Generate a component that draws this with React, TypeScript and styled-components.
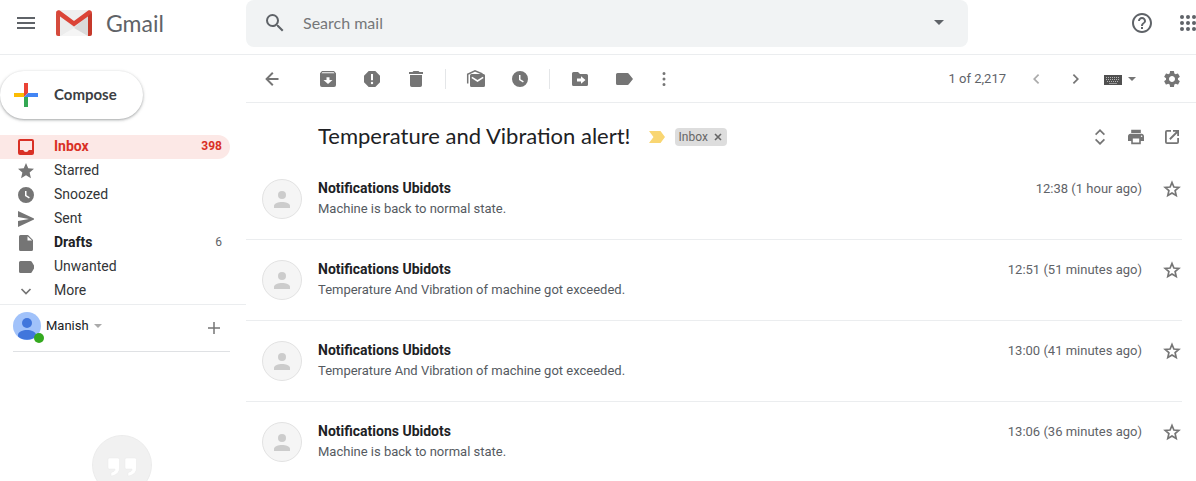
import React from 'react';
import styled, { createGlobalStyle } from 'styled-components';
import {
  MdSearch,
  MdHelpOutline,
  MdSettings,
  MdStar,
  MdPrint,
} from 'react-icons/md';

const display = '"Lato", "Liberation Sans", sans-serif';

const GlobalStyle = createGlobalStyle`
  *, *::before, *::after { box-sizing: border-box; }
  body {
    margin: 0;
    background: #fff;
    color: #202124;
    font-family: Roboto, "Liberation Sans", sans-serif;
    font-size: 14px;
  }
  button, input {
    font: inherit;
    color: inherit;
    border: 0;
    padding: 0;
    background: none;
  }
  button { cursor: pointer; }
  a { color: inherit; text-decoration: none; }
  h1, h2, p, ul { margin: 0; padding: 0; font-weight: 400; }
  ul { list-style: none; }
  svg { display: block; flex: none; }
`;

const Shell = styled.div`
  display: flex;
  flex-direction: column;
  height: 100vh;
  overflow: hidden;
`;

const Header = styled.header`
  display: flex;
  align-items: center;
  flex: none;
  height: 55px;
  padding-bottom: 8px;
  border-bottom: 1px solid #ebedef;
  color: #5f6368;
`;

const Brand = styled.div`
  display: flex;
  align-items: center;
  flex: none;
  width: 246px;
  padding-left: 16px;
`;

const BrandLink = styled.a`
  display: flex;
  align-items: center;
  gap: 14px;
  margin-left: 20px;
  font: 400 23px/28px ${display};
`;

const SearchBar = styled.form`
  display: flex;
  align-items: center;
  align-self: flex-start;
  flex: 0 1 722px;
  height: 47px;
  padding: 0 24px 2px 17px;
  border-radius: 8px;
  background: #f1f3f4;
`;

const SearchInput = styled.input`
  flex: 1;
  min-width: 0;
  margin-left: 16px;
  font: 400 16px/24px ${display};
  outline: none;
  &::placeholder { color: #757779; opacity: 1; }
`;

const HeaderActions = styled.div`
  display: flex;
  align-items: center;
  gap: 26px;
  margin-left: auto;
`;

const PlainButton = styled.button`
  display: flex;
  align-items: center;
  justify-content: center;
`;

const Body = styled.div`
  display: flex;
  flex: 1;
  min-height: 0;
`;

const Sidebar = styled.aside`
  flex: none;
  width: 246px;
`;

const ComposeButton = styled.button`
  display: flex;
  align-items: center;
  gap: 16px;
  width: 143px;
  height: 48px;
  margin: 16px 0;
  padding-left: 14px;
  border-radius: 24px;
  background: #fff;
  box-shadow: 0 1px 2px rgba(60, 64, 67, 0.3), 0 1px 3px 1px rgba(60, 64, 67, 0.15);
  color: #3c4043;
  font: 700 15px/20px ${display};
`;

const ComposeLabel = styled.span`
  padding-bottom: 2px;
`;

const NavLink = styled.a<{ $active?: boolean; $strong?: boolean }>`
  display: flex;
  align-items: center;
  width: 230px;
  height: 24px;
  padding: 0 8px 0 18px;
  border-radius: 0 12px 12px 0;
  background: ${(p) => (p.$active ? '#fce8e6' : 'transparent')};
  color: ${(p) => (p.$active ? '#d93025' : p.$strong ? '#202124' : '#333537')};
  font-weight: ${(p) => (p.$active || p.$strong ? 700 : 400)};
  line-height: 20px;
  svg { color: ${(p) => (p.$active ? '#d93025' : '#757575')}; }
`;

const NavLabel = styled.span`
  flex: 1;
  margin-left: 20px;
  padding-bottom: 2px;
`;

const NavCount = styled.span<{ $active?: boolean }>`
  padding-bottom: 2px;
  font-size: 12px;
  font-weight: ${(p) => (p.$active ? 700 : 400)};
  color: ${(p) => (p.$active ? '#d93025' : '#5f6368')};
`;

const Account = styled.div`
  margin-top: 1px;
  padding: 7px 16px 0 13px;
  border-top: 1px solid #ebedef;
`;

const AccountRow = styled.div`
  display: flex;
  height: 40px;
  border-bottom: 1px solid #dfe1e4;
`;

const AccountButton = styled.button`
  display: flex;
  align-items: center;
  gap: 5px;
  height: 28px;
  font-size: 13px;
`;

const AccountName = styled.span`
  padding-bottom: 2px;
`;

const AccountAvatar = styled.span`
  position: relative;
  width: 28px;
  height: 28px;
`;

const Presence = styled.span`
  position: absolute;
  right: -3px;
  bottom: -3px;
  width: 10px;
  height: 10px;
  border-radius: 50%;
  background: #34a91f;
`;

const AddButton = styled(PlainButton)`
  width: 32px;
  height: 32px;
  margin-left: auto;
`;

const Hangouts = styled.div`
  display: flex;
  justify-content: center;
  margin-top: 83px;
  padding-right: 2px;
`;

const Main = styled.main`
  flex: 1;
  min-width: 0;
`;

const Toolbar = styled.div`
  display: flex;
  align-items: center;
  height: 48px;
  padding: 0 2px 0 4px;
  border-bottom: 1px solid #ebedef;
  color: #757575;
`;

const ToolButton = styled(PlainButton)<{ $width?: number }>`
  flex: none;
  width: ${(p) => p.$width ?? 44}px;
  height: 36px;
  &:disabled { opacity: 0.6; }
`;

const Group = styled.div`
  display: flex;
  & + & {
    margin-left: 7px;
    padding-left: 9px;
    background: linear-gradient(#e4e6e8, #e4e6e8) left center / 1px 20px no-repeat;
  }
`;

const BackSlot = styled.div`
  margin-right: 12px;
`;

const Pager = styled.div`
  display: flex;
  align-items: center;
  margin-left: auto;
`;

const PageCount = styled.span`
  margin-right: 10px;
  color: #5f6368;
  font-size: 13px;
`;

const InputTools = styled(PlainButton)`
  gap: 6px;
  margin: 0 14px 0 8px;
`;

const SubjectRow = styled.div`
  display: flex;
  align-items: center;
  padding: 12px 6px 0 72px;
  height: 56px;
`;

const Subject = styled.h1`
  padding-bottom: 2px;
  font: 400 22px/28px ${display};
  color: #202124;
  white-space: nowrap;
`;

const Importance = styled(PlainButton)`
  margin: 0 10px 0 18px;
`;

const LabelChip = styled.span`
  display: flex;
  align-items: center;
  gap: 6px;
  height: 18px;
  padding: 0 5px 0 4px;
  border-radius: 4px;
  background: #ddd;
  color: #666;
  font-size: 12px;
`;

const SubjectActions = styled.div`
  display: flex;
  margin-left: auto;
  color: #757575;
`;

const Message = styled.li`
  display: flex;
  margin-right: 14px;
  padding: 20px 0 20px 16px;
  border-bottom: 1px solid #ebedef;
`;

const MessageText = styled.div`
  flex: 1;
  min-width: 0;
  margin-left: 16px;
  line-height: 20px;
`;

const Sender = styled.h2`
  margin-bottom: 2px;
  font-size: 14px;
  font-weight: 700;
  line-height: 18px;
`;

const Snippet = styled.p`
  color: #555a5f;
  font-size: 13px;
`;

const MessageTime = styled.time`
  margin-right: 20px;
  color: #5f6368;
  font-size: 13px;
  line-height: 20px;
`;

const StarButton = styled(PlainButton)`
  width: 20px;
  height: 20px;
  color: #757575;
`;

const Glyph = ({ d, size = 20 }: { d: string; size?: number }) => (
  <svg width={size} height={size} viewBox={`0 0 ${size} ${size}`} fill="currentColor" fillRule="evenodd" aria-hidden="true">
    <path d={d} />
  </svg>
);

const paths = {
  back: 'M16.5 9H6.9l4.6-4.6L10.100 3 3.200 10l6.900 7 1.400-1.400L6.900 11h9.600z',
  archive: 'M4 2h12l2 2.200V16a2 2 0 0 1-2 2H4a2 2 0 0 1-2-2V4.200zM4.300 3.200l-.8 1h13l-.8-1zM8.500 8.200V11H5.500L10 15l4.500-4h-3V8.200z',
  report: 'M6.700 2h6.600L18 6.700v6.600L13.300 18H6.700L2 13.300V6.700zM9 5v6.300h2V5zM10 12.800a1.200 1.200 0 1 0 0 2.400 1.200 1.200 0 0 0 0-2.400z',
  trash: 'M7.500 2h5l1 1H17v2H3V3h3.500zM4 6h12v10.200a1.800 1.800 0 0 1-1.800 1.800H5.800A1.800 1.800 0 0 1 4 16.200z',
  clock: 'M8 0a8 8 0 1 1 0 16A8 8 0 0 1 8 0zM7 4v5l4 2.500.8-1.300L8.500 8.200V4z',
  move: 'M3.500 3H8l2 2h6.500A1.500 1.500 0 0 1 18 6.500v9a1.500 1.500 0 0 1-1.500 1.500h-13A1.500 1.500 0 0 1 2 15.500v-11A1.500 1.500 0 0 1 3.500 3zM11 7.200V9.500H7v3h4v2.300L15.500 11z',
  label: 'M3.500 4h10c.6 0 1 .3 1.300.7L19 10l-4.200 5.300c-.3.4-.7.7-1.300.7h-10A1.500 1.500 0 0 1 2 14.500v-9A1.500 1.500 0 0 1 3.500 4z',
  more: 'M10 3a1.500 1.500 0 1 1 0 3 1.500 1.500 0 0 1 0-3zM10 8.500a1.500 1.500 0 1 1 0 3 1.500 1.500 0 0 1 0-3zM10 14a1.500 1.500 0 1 1 0 3 1.500 1.500 0 0 1 0-3z',
  left: 'M12 5l1.200 1.200L9.400 10l3.800 3.800L12 15l-5-5z',
  right: 'M8 5L6.800 6.200l3.800 3.800-3.800 3.800L8 15l5-5z',
  unfold: 'M10 2l5 5-1.200 1.200L10 4.400 6.200 8.200 5 7zM10 18l-5-5 1.200-1.200 3.800 3.800 3.800-3.800L15 13z',
  popout: 'M3 5a2 2 0 0 1 2-2h4v1.800H4.800v10.400h10.400V11H17v4a2 2 0 0 1-2 2H5a2 2 0 0 1-2-2zM11 3h6v6h-1.800V6.200l-6.700 6.700-1.300-1.300 6.700-6.800H11z',
  inbox: 'M2 0h12a2 2 0 0 1 2 2v12a2 2 0 0 1-2 2H2a2 2 0 0 1-2-2V2a2 2 0 0 1 2-2zM2 2v9h3.200a3 3 0 0 0 5.600 0H14V2z',
  sent: 'M0 0l17 8L0 16V10l11-2L0 6z',
  file: 'M3 0h7l5 5v9.500a1.500 1.500 0 0 1-1.500 1.500h-11A1.500 1.500 0 0 1 1 14.500v-13A1.500 1.500 0 0 1 2.500 0zM9.500 1.200V5.500H14z',
  tag: 'M2.500 2h9.800c.5 0 1 .3 1.300.6L17 8l-3.400 5.400c-.3.400-.8.6-1.300.6H2.500A1.500 1.500 0 0 1 1 12.500v-9A1.500 1.500 0 0 1 2.500 2z',
};

const Caret = ({ width = 8, color = 'currentColor' }: { width?: number; color?: string }) => (
  <svg width={width} height={width / 2} viewBox="0 0 8 4" fill={color} aria-hidden="true">
    <path d="M0 0h8L4 4z" />
  </svg>
);

const MenuIcon = () => (
  <svg width="20" height="20" viewBox="0 0 20 20" fill="#5f6368" aria-hidden="true">
    <path d="M1 4h18v2H1zM1 9h18v2H1zM1 14h18v2H1z" />
  </svg>
);

const GmailLogo = () => (
  <svg width="36" height="26" viewBox="0 0 36 26" aria-hidden="true">
    <path d="M2 0h32v26H2z" fill="#e6e6e6" />
    <path d="M4 26l14-9 14 9z" fill="#f5f5f5" />
    <path d="M4 6l14 12L4 26z" fill="#ececec" />
    <path d="M32 6L18 18l14 8z" fill="#dadada" />
    <path d="M3 0h30L18 11z" fill="#efefef" />
    <path d="M0 2.500C0 .8 2.200-.6 3.800.6L18 11 32.200.6C33.800-.6 36 .8 36 2.500L34 5 18 16.500 2 5z" fill="#db4437" />
    <path d="M0 2.500L4 6v20H2a2 2 0 0 1-2-2z" fill="#d54b3d" />
    <path d="M36 2.500L32 6v20h2a2 2 0 0 0 2-2z" fill="#c5392b" />
  </svg>
);

const AppsIcon = () => (
  <svg width="16" height="16" viewBox="0 0 16 16" fill="#5f6368" aria-hidden="true">
    {[2, 8, 14].map((y) => [2, 8, 14].map((x) => <circle key={`${x}-${y}`} cx={x} cy={y} r="2" />))}
  </svg>
);

const ComposeIcon = () => (
  <svg width="24" height="24" viewBox="0 0 24 24" aria-hidden="true">
    <path d="M10 0h4v10l-4 4z" fill="#ea4335" />
    <path d="M0 10h10v4H0z" fill="#fbbc04" />
    <path d="M14 10h10v4H10z" fill="#4285f4" />
    <path d="M10 14h4v10h-4z" fill="#34a853" />
  </svg>
);

const UnreadIcon = () => (
  <svg width="20" height="20" viewBox="0 0 20 20" aria-hidden="true">
    <path d="M1.700 14.500V5.200L9 1.800l7.500 3.200" fill="none" stroke="currentColor" strokeWidth="1.500" />
    <path d="M5.500 5h12A1.500 1.500 0 0 1 19 6.500v10a1.500 1.500 0 0 1-1.500 1.500h-12A1.500 1.500 0 0 1 4 16.500v-10A1.500 1.500 0 0 1 5.500 5z" fill="currentColor" />
    <path d="M5.800 8.300L11.500 12l5.700-3.700" fill="none" stroke="#fff" strokeWidth="1.500" />
  </svg>
);

const KeyboardIcon = () => (
  <svg width="18" height="12" viewBox="0 0 18 12" aria-hidden="true">
    <path d="M0 2h18v10H0z" fill="#505050" />
    <path d="M2 4.500h14M2 6.500h14" stroke="#b5b5b5" strokeDasharray="1 1" />
    <path d="M3 8.500h12" stroke="#b5b5b5" strokeDasharray="1 1" />
    <path d="M5 10.500h8" stroke="#999" />
  </svg>
);

const ImportanceIcon = () => (
  <svg width="16" height="12" viewBox="0 0 16 12" aria-hidden="true">
    <path d="M0 0h11.500L16 6l-4.500 6H0l4.500-6z" fill="#f9d672" />
  </svg>
);

const StarIcon = () => (
  <svg width="20" height="20" viewBox="0 0 20 20" fill="none" stroke="currentColor" strokeWidth="1.700" aria-hidden="true">
    <path d="M10 3.500l1.900 4.500 4.900.4-3.700 3.200 1.100 4.800-4.200-2.500-4.200 2.500 1.100-4.800-3.700-3.200 4.900-.4z" />
  </svg>
);

const ExpandIcon = () => (
  <svg width="16" height="16" viewBox="0 0 16 16" fill="none" stroke="currentColor" strokeWidth="1.700" aria-hidden="true">
    <path d="M3.500 6L8 10.500 12.500 6" />
  </svg>
);

const PlusIcon = () => (
  <svg width="12" height="12" viewBox="0 0 12 12" stroke="#757575" strokeWidth="1.500" aria-hidden="true">
    <path d="M0 6h12M6 0v12" />
  </svg>
);

const UserIcon = () => (
  <svg width="28" height="28" viewBox="0 0 28 28" aria-hidden="true">
    <circle cx="14" cy="14" r="14" fill="#a1c2fa" />
    <circle cx="14" cy="11" r="5" fill="#4176dc" />
    <path d="M5 24.500v-1.500c0-3.500 5-5 9-5s9 1.500 9 5v1.500a14 14 0 0 1-18 0z" fill="#4176dc" />
  </svg>
);

const SenderAvatar = () => (
  <svg width="40" height="40" viewBox="0 0 40 40" role="img" aria-label="Sender">
    <circle cx="20" cy="20" r="19.500" fill="#f5f5f5" stroke="#e2e2e2" />
    <circle cx="20" cy="16" r="4" fill="#ccc" />
    <path d="M12 29v-2c0-2.700 4.500-4 8-4s8 1.300 8 4v2z" fill="#ccc" />
  </svg>
);

const HangoutsIcon = () => (
  <svg width="60" height="60" viewBox="0 0 60 60" aria-hidden="true">
    <circle cx="30" cy="30" r="29.500" fill="#f1f1f1" stroke="#ececec" />
    <path
      d="M17.500 23h8.500a1.500 1.500 0 0 1 1.500 1.500V33c0 4-3 7.500-8.500 8v-3.500c2.500-.5 4-1.500 4-3.500h-5.500a1.500 1.500 0 0 1-1.500-1.500v-8a1.500 1.500 0 0 1 1.500-1.500zM34.500 23H43a1.500 1.500 0 0 1 1.500 1.500V33c0 4-3 7.500-8.500 8v-3.500c2.500-.5 4-1.500 4-3.500h-5.500a1.500 1.500 0 0 1-1.500-1.500v-8a1.500 1.500 0 0 1 1.500-1.500z"
      fill="#fff"
      stroke="#e8e8e8"
      strokeWidth=".5"
    />
  </svg>
);

const folders = [
  { name: 'Inbox', icon: <Glyph size={16} d={paths.inbox} />, count: '398', active: true },
  { name: 'Starred', icon: <MdStar viewBox="2 2 20 20" size={16} /> },
  { name: 'Snoozed', icon: <Glyph size={16} d={paths.clock} /> },
  { name: 'Sent', icon: <Glyph size={16} d={paths.sent} /> },
  { name: 'Drafts', icon: <Glyph size={16} d={paths.file} />, count: '6', strong: true },
  { name: 'Unwanted', icon: <Glyph size={16} d={paths.tag} /> },
  { name: 'More', icon: <ExpandIcon /> },
];

const messages = [
  { time: '12:38', age: '1 hour ago', text: 'Machine is back to normal state.' },
  { time: '12:51', age: '51 minutes ago', text: 'Temperature And Vibration of machine got exceeded.' },
  { time: '13:00', age: '41 minutes ago', text: 'Temperature And Vibration of machine got exceeded.' },
  { time: '13:06', age: '36 minutes ago', text: 'Machine is back to normal state.' },
];

export default function App() {
  return (
    <Shell>
      <GlobalStyle />
      <Header>
        <Brand>
          <PlainButton aria-label="Main menu"><MenuIcon /></PlainButton>
          <BrandLink href="#inbox"><GmailLogo />Gmail</BrandLink>
        </Brand>
        <SearchBar role="search">
          <PlainButton type="button" aria-label="Search"><MdSearch size={24} /></PlainButton>
          <SearchInput type="text" placeholder="Search mail" aria-label="Search mail" />
          <PlainButton type="button" aria-label="Search options"><Caret width={10} /></PlainButton>
        </SearchBar>
        <HeaderActions>
          <PlainButton aria-label="Support"><MdHelpOutline size={24} /></PlainButton>
          <PlainButton aria-label="Apps"><AppsIcon /></PlainButton>
        </HeaderActions>
      </Header>
      <Body>
        <Sidebar>
          <ComposeButton><ComposeIcon /><ComposeLabel>Compose</ComposeLabel></ComposeButton>
          <nav aria-label="Folders">
            {folders.map((f) => (
              <NavLink key={f.name} href={`#${f.name.toLowerCase()}`} $active={f.active} $strong={f.strong}>
                {f.icon}
                <NavLabel>{f.name}</NavLabel>
                {f.count && <NavCount $active={f.active}>{f.count}</NavCount>}
              </NavLink>
            ))}
          </nav>
          <Account>
            <AccountRow>
              <AccountButton>
                <AccountAvatar><UserIcon /><Presence /></AccountAvatar>
                <AccountName>Manish</AccountName>
                <Caret color="#aaa" />
              </AccountButton>
              <AddButton aria-label="New conversation"><PlusIcon /></AddButton>
            </AccountRow>
          </Account>
          <Hangouts><HangoutsIcon /></Hangouts>
        </Sidebar>
        <Main>
          <Toolbar>
            <BackSlot>
              <ToolButton aria-label="Back to Inbox"><Glyph d={paths.back} /></ToolButton>
            </BackSlot>
            <Group>
              <ToolButton aria-label="Archive"><Glyph d={paths.archive} /></ToolButton>
              <ToolButton aria-label="Report spam"><Glyph d={paths.report} /></ToolButton>
              <ToolButton aria-label="Delete"><Glyph d={paths.trash} /></ToolButton>
            </Group>
            <Group>
              <ToolButton aria-label="Mark as unread"><UnreadIcon /></ToolButton>
              <ToolButton aria-label="Snooze"><Glyph size={16} d={paths.clock} /></ToolButton>
            </Group>
            <Group>
              <ToolButton aria-label="Move to"><Glyph d={paths.move} /></ToolButton>
              <ToolButton aria-label="Labels"><Glyph d={paths.label} /></ToolButton>
              <ToolButton $width={36} aria-label="More"><Glyph d={paths.more} /></ToolButton>
            </Group>
            <Pager>
              <PageCount>1 of 2,217</PageCount>
              <ToolButton $width={40} disabled aria-label="Newer"><Glyph d={paths.left} /></ToolButton>
              <ToolButton $width={40} aria-label="Older"><Glyph d={paths.right} /></ToolButton>
              <InputTools aria-label="Input tools"><KeyboardIcon /><Caret /></InputTools>
              <ToolButton aria-label="Settings"><MdSettings size={20} /></ToolButton>
            </Pager>
          </Toolbar>
          <SubjectRow>
            <Subject>Temperature and Vibration alert!</Subject>
            <Importance aria-label="Important"><ImportanceIcon /></Importance>
            <LabelChip>
              Inbox
              <PlainButton aria-label="Remove label Inbox">
                <svg width="8" height="8" viewBox="0 0 8 8" stroke="#666" strokeWidth="1.600" aria-hidden="true">
                  <path d="M1 1l6 6M7 1L1 7" />
                </svg>
              </PlainButton>
            </LabelChip>
            <SubjectActions>
              <ToolButton $width={36} aria-label="Expand all"><Glyph d={paths.unfold} /></ToolButton>
              <ToolButton $width={36} aria-label="Print all"><MdPrint viewBox="2 2 20 20" size={16} /></ToolButton>
              <ToolButton $width={36} aria-label="In new window"><Glyph d={paths.popout} /></ToolButton>
            </SubjectActions>
          </SubjectRow>
          <ul>
            {messages.map((m) => (
              <Message key={m.time}>
                <SenderAvatar />
                <MessageText>
                  <Sender>Notifications Ubidots</Sender>
                  <Snippet>{m.text}</Snippet>
                </MessageText>
                <MessageTime>{m.time} ({m.age})</MessageTime>
                <StarButton aria-label="Star"><StarIcon /></StarButton>
              </Message>
            ))}
          </ul>
        </Main>
      </Body>
    </Shell>
  );
}
